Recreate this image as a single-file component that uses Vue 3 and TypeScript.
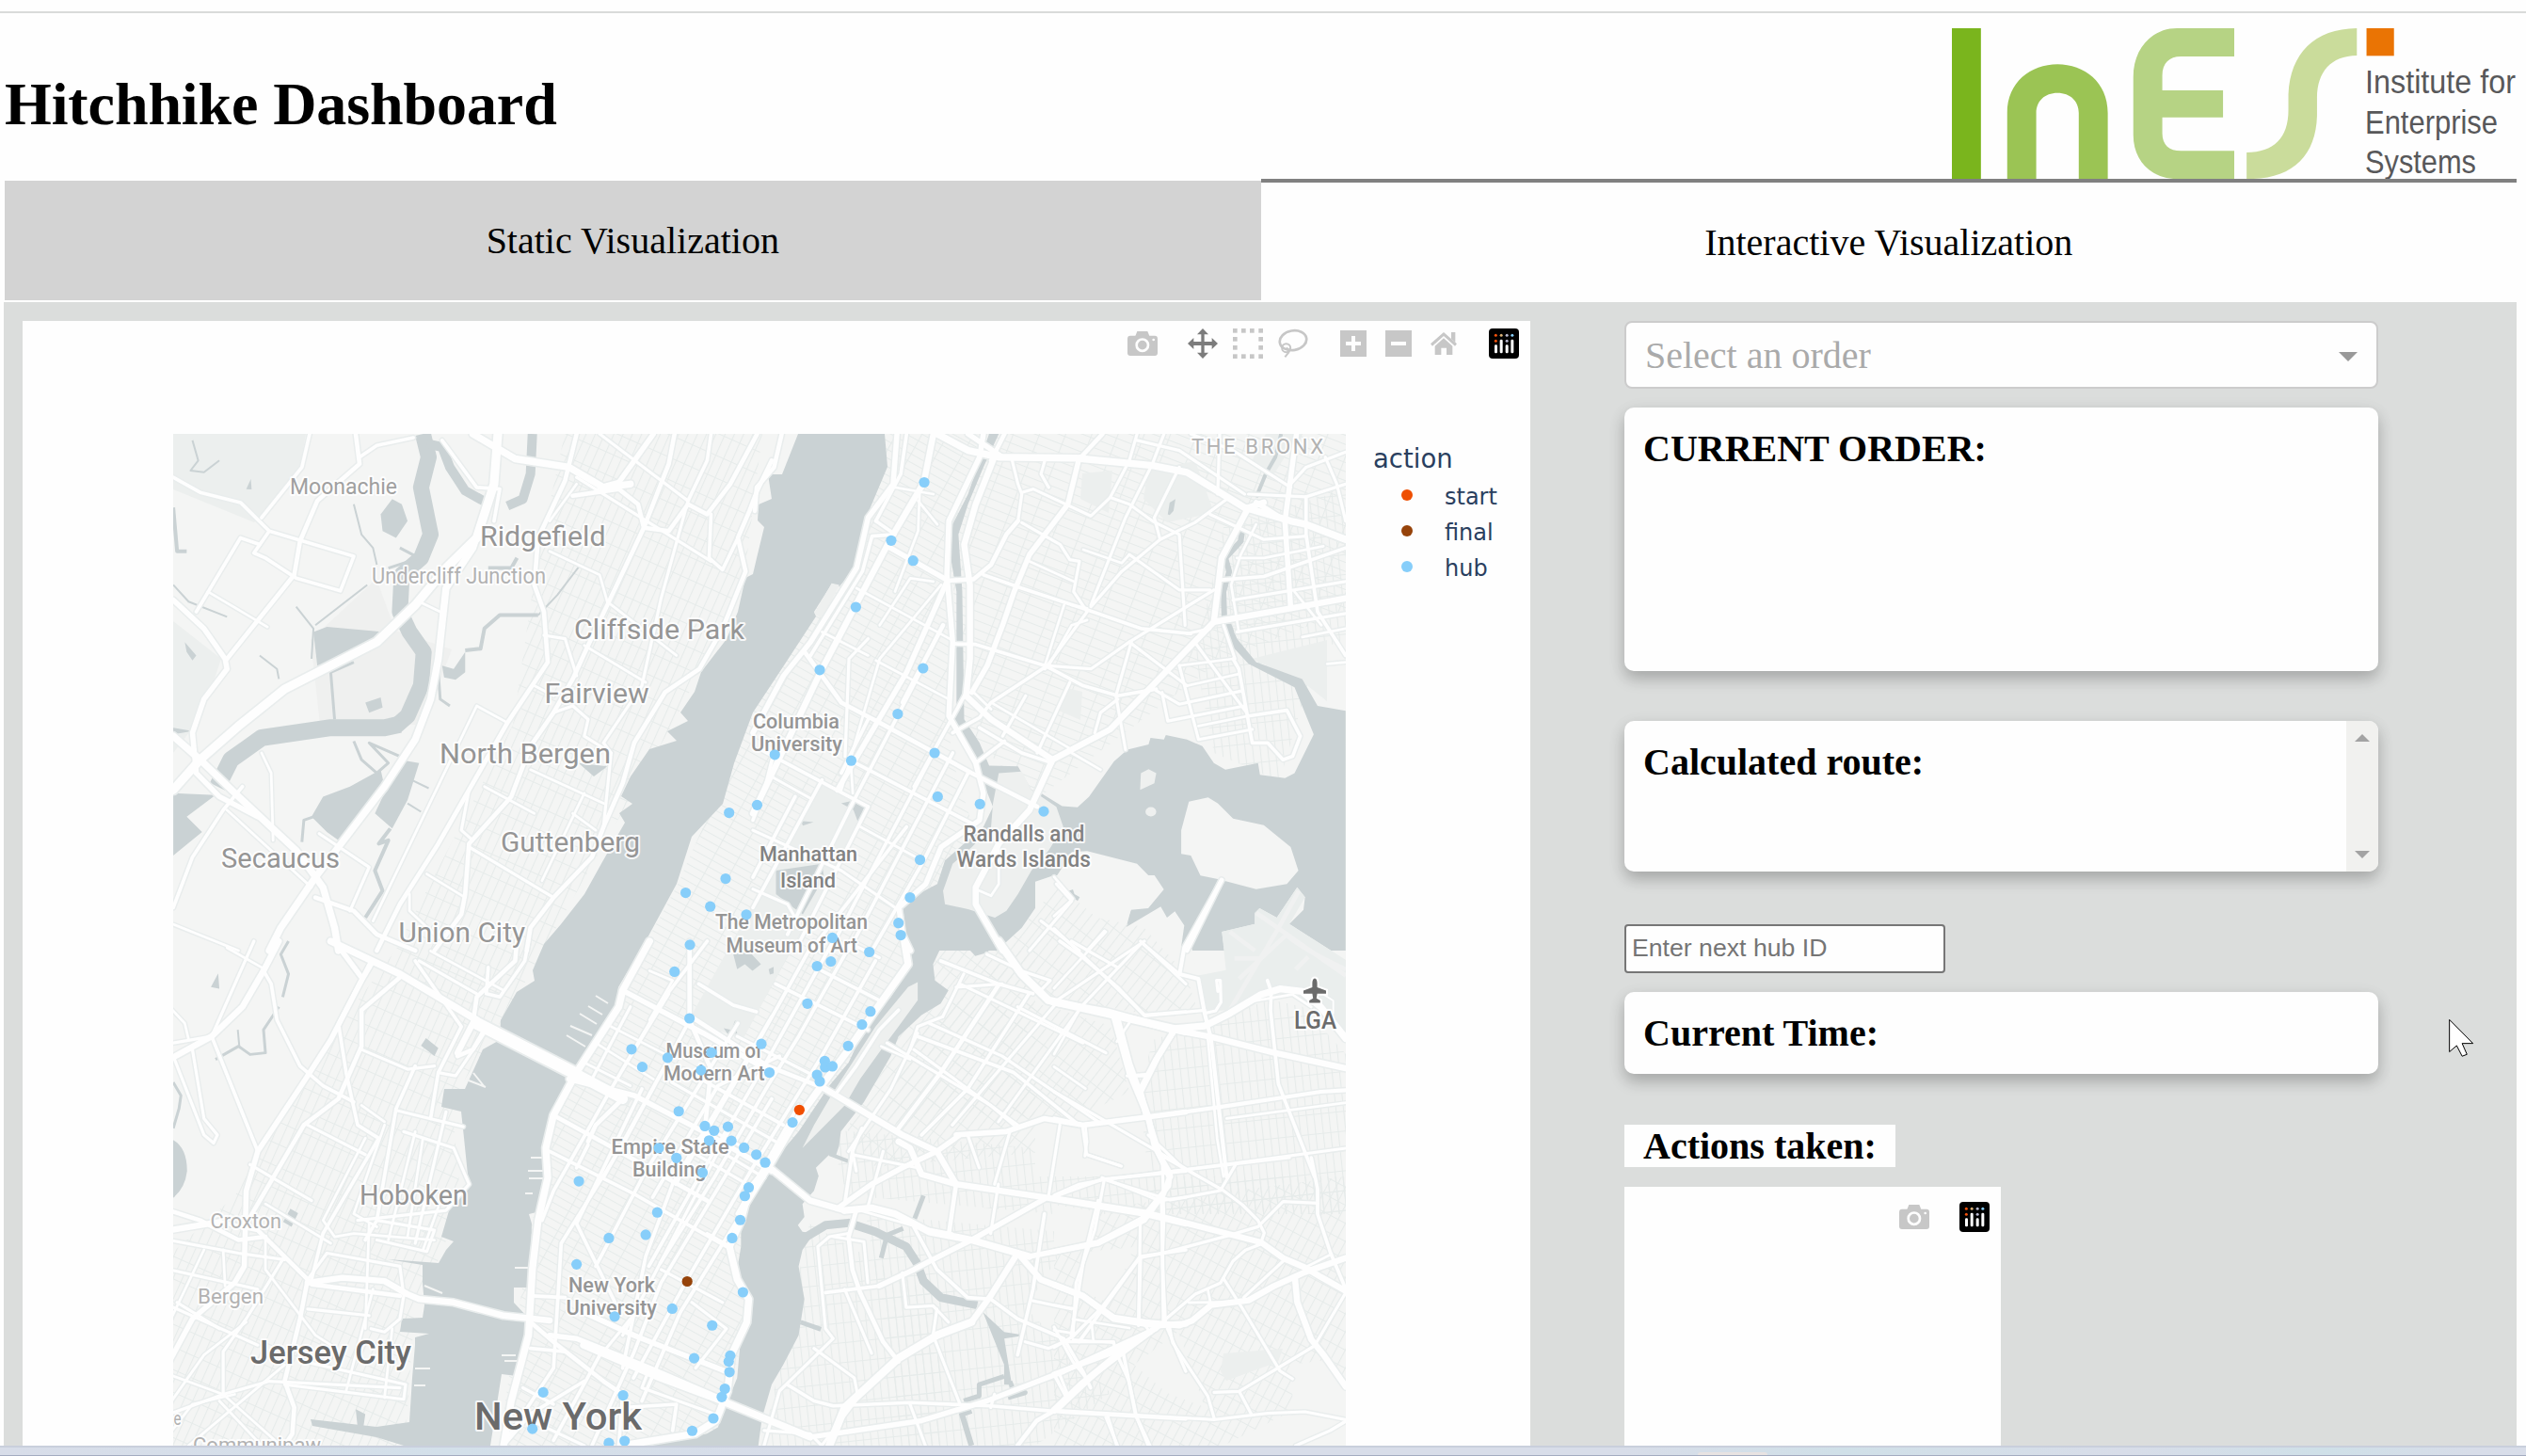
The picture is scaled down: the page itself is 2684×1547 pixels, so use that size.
<script setup lang="ts">
interface Sheet {
  x: number
  y: number
  sx: number
  sy: number
  // [stroke width, polyline points]
  roads: [number, string][]
  hubs: [number, number][]
}

interface Label {
  t: string
  x: number
  y: number
  w: number
  s: number
  c: string
  b?: number
}

// The map is stored as survey sheets, each one with its own origin and scale.
const A: Sheet = {
  x: 180, y: 450, sx: 2.45, sy: 2.8,
  roads: [
    [10, '855,31 845,180 800,340 720,430 640,540 540,650 300,790 180,900 80,1000 10,1090'],
    [8, '845,180 790,370 720,490 700,700 680,820 640,940 560,1080 450,1245 380,1350 290,1500 260,1568'],
    [8, '10,930 80,1000 180,1110 330,1270 400,1380 430,1500 440,1568'],
    [6, '10,525 90,610 145,700 150,730 90,820 60,920 70,1040 130,1110 230,1170'],
    [4, '10,160 80,205 185,235 260,320 480,395 445,498 330,460 250,400 220,385 260,320'],
    [4, '365,31 345,130 240,280'],
    [4, '235,360 185,340 70,560'],
    [3, '100,500 255,605'],
    [5, '485,31 495,120 385,230 340,350 325,450 150,700'],
    [4, '495,100 540,65 635,42'],
    [4, '710,50 800,190 860,195 845,290'],
    [8, '790,31 900,105 1040,130 1130,190 1200,180'],
    [6, '1260,31 1170,175 1120,190'],
    [5, '1050,215 1170,195 1220,240 1235,310 1300,320 1350,240 1400,270 1460,180 1530,31'],
    [5, '1568,110 1530,200 1510,260 1480,340 1500,440 1440,610 1380,730 1290,800 1210,950 1180,1070 1130,1200 1100,1290 1000,1410 940,1500 930,1568'],
    [4, '1410,270 1405,400 1440,435 1480,340'],
    [5, '1060,31 1030,170 960,340 950,480 975,560 985,710 880,890 800,1050 700,1250 600,1430 540,1568'],
    [5, '1315,31 1300,120 1235,310 1140,540 1090,660 1050,760 1000,860 940,960 890,1110 780,1250 770,1400 760,1460 690,1568'],
    [3.5, '1350,230 1280,520 1230,780 1130,950 1150,980 1130,1200'],
    [3.5, '1120,31 1350,230'], [3.5, '1060,160 1410,410'], [3, '1080,660 1240,770'],
    [3.5, '975,630 1030,640 1060,750'], [3.5, '1000,860 1050,840 1090,880 1080,930 1150,980'],
    [3, '990,380 1120,450 1140,530 1320,690'], [4, '1410,31 1400,110 1350,230'], [3, '990,290 1060,180'],
    [3, '530,1480 800,840 880,890'], [3.5, '780,1260 1000,1410'], [3, '670,1340 770,1410'],
    [3, '820,1080 950,1160'], [3, '940,1030 1130,1130'], [3, '1080,1100 970,1360'],
    [5, '380,1410 480,1450 540,1520 640,1568'],
    [3, '240,980 265,1040 270,1240'], [3, '150,1150 370,1380'], [3.5, '390,1220 520,1320 470,1450'],
    [4, '10,1440 60,1290 140,1150 190,1080'], [3, '10,1490 180,1568'], [3.5, '780,1090 760,1210 790,1240'],
    [3, '950,780 1000,810'], [3, '1050,1160 1110,1210'], [3, '650,530 705,560'], [3, '625,1400 625,1450 690,1520'],
  ],
  hubs: [[1457, 1158], [1448, 1354], [1344, 1396], [1408, 1437], [1502, 1461]],
}

const B: Sheet = {
  x: 800, y: 450, sx: 2.45, sy: 2.8,
  roads: [
    [5, '75,31 55,130 10,190 5,260'],
    [8, '480,31 560,80 640,100 840,103 1040,125 1130,145 1280,250 1400,290 1440,300 1543,345'],
    [6, '560,31 650,100'],
    [7, '1330,235 1290,250 1220,400 1200,590 1040,780 930,910 780,1000 720,1150 640,1250 580,1380 580,1430 650,1568'],
    [6, '1310,235 1380,285'],
    [7, '1200,590 1400,550 1543,520'],
    [6, '1415,31 1385,290 1400,550'],
    [6, '850,100 820,240 720,390 680,500 650,600 610,720 570,800'],
    [5, '910,31 850,105'],
    [7, '625,110 580,240 550,360 565,480 565,700 555,810 620,880 780,1000'],
    [5, '655,31 620,110'],
    [4, '590,905 700,980 780,1010'],
    [6, '600,31 590,100 510,290 505,450 520,650 510,870 580,1010 600,1100 590,1180 490,1260 450,1370 380,1440 390,1520 410,1568'],
    [5, '515,467 575,463 620,420 660,330 690,290'],
    [6, '350,365 505,465'], [6, '505,470 400,740 220,1090'],
    [6, '375,31 365,180 300,280 270,430 150,650 80,750 0,920'],
    [7, '470,31 445,175 360,340 180,730 0,1160'],
    [4, '400,31 385,150 320,290'], [4, '320,290 370,330 310,335 285,440 150,690'],
    [5, '135,680 230,830 330,890 570,1040 740,1140'],
    [4, '520,920 590,875 620,830 760,725'], [4, '580,1010 655,945'],
    [4, '520,655 580,657 760,720 860,780 950,810 1050,790'],
    [4, '600,450 700,490 860,550 1010,610 1140,625'],
    [3.5, '700,295 800,360 825,405 850,410 835,500 870,560 760,730'],
    [3, '830,540 870,550'],
    [3.5, '675,110 690,180 700,210 690,290'], [3.5, '760,110 750,150 770,190'],
    [3.5, '700,205 730,195 880,275 930,220 980,110 1000,31'], [3.5, '1070,31 1040,120 970,280 880,540'],
    [3.5, '930,220 980,240 1040,290 1110,330 1125,600'], [3.5, '1215,31 1210,210'],
    [3.5, '1240,220 1150,295 1060,345 960,440 880,545'], [3.5, '1110,130 1045,280 1060,345'],
    [3, '860,375 960,415 980,390'], [3.5, '980,390 1110,495 1190,495'],
    [3.5, '1000,50 1110,80 1280,210'], [3.5, '1190,270 1330,345 1440,335'],
    [3.5, '1140,31 1250,80 1400,190'], [3.5, '1290,210 1440,218 1543,180'], [3.5, '1490,100 1520,180 1543,290'],
    [3.5, '1400,180 1440,130 1543,85'], [4, '1440,218 1440,330 1470,560 1543,690'], [3, '1410,500 1480,600'],
    [3, '1260,400 1330,400 1485,365'], [3, '1310,300 1270,390 1245,480 1265,620'],
    [4, '1220,465 1330,455 1543,370'], [3.5, '1250,525 1543,470'], [3.5, '1260,620 1543,565'], [3, '1430,635 1543,610'],
    [3, '1495,715 1543,710'],
    [4, '1290,870 1390,853 1425,930 1405,990 1380,1000 1340,950 1300,950 1265,730 1250,700'],
    [3.5, '1150,650 1285,860'], [3.5, '1110,720 1160,940 1300,910'], [3, '1110,720 1250,700'],
    [3, '1130,780 1265,745'], [3.5, '1050,795 1110,835 1275,795'], [3.5, '1065,800 1080,885 1280,840'], [3, '1160,900 1290,870'],
    [3.5, '1225,600 1255,700'], [3.5, '760,720 880,730 980,650 1200,495'], [3.5, '1130,625 1190,610'],
    [3.5, '980,650 1130,780'], [3.5, '985,650 945,810 970,970'], [3.5, '950,820 905,860 890,920'],
    [3.5, '825,770 740,980'], [3.5, '710,810 650,930'], [3, '620,830 830,970'], [3, '830,980 905,1030'],
    [3, '720,410 835,470'], [3, '810,540 760,720'], [3, '870,585 830,600 770,720'],
    [3, '575,800 620,850'], [3, '640,1260 640,1370 620,1405 590,1390'],
    [5, '495,600 390,830'], [4, '420,1080 560,790'], [3, '490,480 330,700 230,1090'], [3, '470,470 410,460 330,600'],
    [4, '470,980 200,1568'], [4, '440,730 250,1150 90,1520'], [4, '300,880 230,1040'], [4, '520,980 410,1220 250,1568'],
    [4, '560,1040 440,1310 310,1568'], [4, '400,1200 150,1568'], [4, '300,1140 110,1568'],
    [4, '110,1110 0,1350'], [4, '180,1060 0,1440'], [4, '50,1000 30,1090 0,1180'], [3.5, '240,990 250,700 300,640'],
    [4, '20,970 300,1140'], [3.5, '0,1210 230,1330 370,1440'], [4, '250,1000 570,1190'], [3, '270,490 520,645'],
    [3, '320,705 510,820'], [3, '180,620 300,690'], [3, '40,1045 150,1115'], [3, '280,1200 440,1300'],
    [3, '255,1010 260,1100'], [3, '370,190 470,210'], [3, '430,230 480,300'], [3, '435,180 430,320 370,500'],
    [3.5, '0,1385 90,1430 110,1470'],
    [5, '1220,1358 1130,1568'], [3.5, '790,1370 830,1420 720,1568'], [3.5, '750,1480 850,1568'], [3.5, '915,1510 870,1568'],
  ],
  hubs: [
    [446, 175], [360, 348], [417, 408], [268, 546], [174, 733], [443, 728], [377, 864], [473, 980], [57, 985],
    [256, 1003], [481, 1110], [591, 1132], [757, 1154], [11, 1135], [435, 1298], [409, 1410], [379, 1486],
    [385, 1522], [207, 1530],
  ],
}

const C: Sheet = {
  x: 180, y: 1000, sx: 2.45, sy: 2.866,
  roads: [
    [7, '285,0 245,90 190,200 110,290 0,360'], [4, '245,90 265,130 280,240 340,380 400,440 480,490'],
    [4, '110,290 230,640'], [3, '0,200 40,250 50,300'], [3.5, '10,310 110,290'],
    [3.5, '10,350 90,590 115,615 125,590 90,540 60,330'], [3.5, '220,0 110,290'], [3, '150,20 240,80'],
    [6, '530,60 500,120 420,300 360,410 230,640 200,760 195,990 170,1040 60,1150 0,1280'],
    [6, '430,0 500,110'],
    [8, '420,0 600,100 800,240'], [14, '800,250 1060,405'], [12, '1060,405 1180,480'],
    [4, '520,70 440,250 460,400 490,560 545,600 400,890 370,1030'],
    [5, '905,0 900,60 800,170 790,250'], [5, '600,110 500,210 500,320 440,480 350,560 200,860'],
    [4, '640,60 730,210 760,260 700,400 680,540'], [4, '830,80 825,160 860,170 925,60 935,0'],
    [7, '790,250 750,340'], [5, '820,270 790,330 750,350'], [4, '640,380 590,510 540,850 510,910'],
    [3.5, '700,400 745,410 820,280'], [3.5, '720,520 640,920'], [3.5, '590,515 765,565'], [3.5, '500,330 620,390 690,380'],
    [3.5, '610,580 740,630 780,740 720,820 490,850'], [3, '660,600 620,900'], [3, '640,580 570,910'],
    [3, '700,810 660,940'], [3, '500,500 560,550'], [3.5, '360,560 510,650'], [3.5, '210,680 370,790'], [3, '250,800 420,920'],
    [3, '560,560 480,830 540,870'], [3, '510,600 400,850 430,900 480,890 690,910'],
    [3.5, '650,60 800,160'], [3, '680,30 870,150'],
    [7, '0,880 130,855'], [5, '130,855 230,880 360,1030 340,1150 300,1340 325,1420 320,1500 300,1536'],
    [5, '0,820 80,850 180,910 250,900'],
    [7, '360,1040 450,1025 560,1035 620,1075 650,1090 740,1100 870,1140 990,1155'], [5, '370,1045 600,1080'],
    [3.5, '0,1000 230,1060'], [3.5, '0,910 180,950 300,970'], [3.5, '540,910 670,945 690,880 540,850'],
    [3.5, '360,1120 520,1140'], [3.5, '360,1030 410,950 600,990 610,1080 600,1150 560,1190 525,1180'],
    [3, '520,860 510,1180'], [3.5, '300,1350 610,1395 615,1350 350,1280'], [3.5, '0,1440 140,1380 260,1340 600,1360'],
    [3, '0,1320 140,1380 290,1536'], [3, '200,1160 90,1260 0,1410'], [3.5, '140,1380 140,1250 200,1150 300,960'],
    [3.5, '0,1110 230,1230'], [3, '530,1060 460,1370'], [3, '580,1180 560,1390'], [3, '50,1536 300,1290'],
    [3, '140,940 145,1050'], [3, '250,910 250,1000 380,1200 420,1230'], [3, '90,940 0,1160'], [3.5, '20,1100 130,1180'],
    [3, '130,1400 240,1536'], [3, '0,1500 60,1410 170,1380'],
    [8, '1250,0 1180,150 1170,200 1060,400 1000,530 980,630 985,720 960,850 945,1000 935,1200 890,1400 870,1536'],
    [6, '1180,150 1390,280 1568,400'], [6, '1040,420 1210,470 1390,580 1568,700'],
    [5, '1000,530 1140,620 1400,790'], [4, '990,640 1210,770 1450,930'],
    [5, '1354,0 1354,240 1410,390 1395,560'], [4, '1090,620 1060,690'],
    [4, '1400,0 1290,170 1140,470 1000,760 970,850'], [4, '1480,250 1240,700 1110,990'],
    [4, '1568,230 1310,740 1240,960 1180,1300'], [4, '1568,480 1280,1040 1210,1250 1100,1536'],
    [4, '1568,680 1330,1130 1230,1400'], [4, '1350,250 1180,620 1020,920 1000,1300 870,1530'],
    [4, '1290,380 1130,720'], [4, '1230,450 1060,860 1160,1100'], [3.5, '1460,570 1180,1200'],
    [5, '1180,480 1110,560 1090,610'], [3.5, '1200,200 1100,420'], [3.5, '1300,160 1180,390'],
    [5, '940,1160 1010,1230 1130,1340 1180,1380'], [4, '940,1240 1030,1250'], [4, '945,1080 1030,1085'],
    [6, '990,1200 1060,1210 1250,1300 1450,1400'], [5, '1080,1130 1250,1220 1450,1310'],
    [4, '1130,1240 1000,1520'], [4, '1180,1380 1170,1536'], [4, '1180,1420 1320,1410 1310,1490'],
    [4, '870,1536 940,1440 1080,1340'], [3.5, '1400,890 1460,930'], [3.5, '1280,1000 1440,1100'], [3.5, '1360,1100 1450,1180 1370,1300'],
    [3.5, '1200,1150 1130,1250'], [3.5, '920,1360 1000,1410'], [3.5, '900,1450 960,1470 1080,1536'], [3.5, '1250,1300 1230,1360 1420,1440'],
    [3, '1250,240 1310,120 1250,90'], [3, '1150,260 1300,350'], [3, '1110,310 1260,420'], [3, '1080,370 1200,440'],
  ],
  hubs: [[1066, 731], [1060, 984], [973, 1374], [945, 1485]],
}

const D: Sheet = {
  x: 620, y: 1000, sx: 2.45, sy: 2.866,
  roads: [
    [8, '835,0 845,70 760,210 690,330 620,440 540,570 480,690 430,760 410,850 380,930 400,1030 430,1090 425,1160 385,1260 375,1370 345,1460 290,1500 100,1536'],
    [7, '615,440 830,590 920,640 970,740'], [7, '480,685 590,790 680,820'],
    [8, '680,820 750,812 810,830 900,885 1010,910 1160,960'], [6, '1160,960 1340,920 1460,850 1510,770 1525,720 1500,650 1470,540'],
    [6, '0,1130 130,1200 370,1310'],
    [8, '0,1230 200,1330 360,1400 590,1510'], [6, '590,1510 650,1500 880,1460 1050,1400 1250,1310 1490,1180'],
    [9, '640,1536 680,1420 820,1270 920,1200 1010,1160'], [7, '1010,1160 1060,1080 1130,950'],
    [7, '1130,950 1190,1030 1300,1080 1380,1150 1490,1170 1568,1165'],
    [9, '1080,0 1140,100 1210,180 1380,225 1568,275'],
    [6, '970,590 1100,580 1200,540 1300,560 1470,535 1568,520'], [6, '660,815 750,740 830,690 920,640 980,590'],
    [7, '820,610 850,630 880,710 970,740 1200,780 1460,830 1568,860'],
    [5, '710,820 690,900 700,1000 720,1070 780,1220 820,1280'], [6, '1200,785 1010,910 900,975 860,1000 770,1050'],
    [4, '770,1050 630,1070'], [4, '1220,780 1350,725 1568,700'],
    [5, '1080,135 930,400 820,570'], [4, '1160,160 1000,450 880,590'], [4, '930,60 1080,130 1170,160'],
    [4, '870,290 1120,400 1290,560'], [3.5, '860,330 1130,560'], [3.5, '900,250 1090,350 1340,550'], [3.5, '980,130 1300,310'],
    [3.5, '1130,200 1360,340'], [3.5, '1050,40 1140,90 1215,120 1190,150'], [3.5, '1460,0 1220,190'], [3.5, '1390,80 1270,0'],
    [4, '1240,0 1300,50 1390,140 1460,225 1568,215'], [3.5, '1450,0 1568,130'], [3.5, '1290,210 1080,550'],
    [3.5, '1230,190 960,560'], [3.5, '790,310 1060,500 1120,560'], [3.5, '870,280 800,450 690,640'],
    [3.5, '935,230 870,260 850,330'], [3.5, '990,100 935,230'], [3.5, '970,140 1090,130'],
    [6, '1380,230 1420,400 1470,540'], [6, '1540,270 1490,360 1450,450'], [3.5, '1415,410 1470,405'],
    [4, '1568,940 1450,960 1290,1220'], [4, '1505,780 1510,1170'], [4, '1450,960 1445,1170'], [4, '1340,790 1300,980 1270,1200'],
    [4, '1200,830 1170,1060 1130,1260'], [5, '970,740 950,900'], [3.5, '1080,740 1060,890'], [3.5, '1240,560 1210,780'],
    [3.5, '1110,580 1070,740'], [3.5, '1000,590 1030,690'], [4, '860,870 920,1000 1000,1085 1060,1090 1130,1150 1250,1210 1300,1310 1320,1360'],
    [4, '725,570 700,640 680,800'], [3.5, '700,650 870,690'], [3.5, '780,640 740,810'], [3.5, '700,640 710,700'],
    [3.5, '690,890 640,900 610,930 630,1180 650,1210 510,1370 470,1536'], [3.5, '650,900 730,915 740,1040'], [3.5, '680,1060 750,1255'],
    [3.5, '600,1240 705,1330 715,1390 620,1536'], [4, '530,1350 600,1400 650,1415 850,1405 1060,1415 1260,1435 1568,1455'],
    [3.5, '850,1410 890,1536'], [3.5, '920,1120 910,1200 980,1410'], [5, '1130,1536 1180,1460 1240,1420 1340,1310 1490,1180'],
    [3.5, '1390,1260 1420,1340 1440,1450 1470,1536'], [3.5, '1360,1450 1390,1536'], [3.5, '830,1010 840,1115 910,1110 950,1160'],
    [3.5, '470,1490 590,1500 620,1536'], [3.5, '1300,570 1310,650 1400,685'], [3.5, '1350,720 1500,790 1568,780'],
    [3.5, '1470,590 1568,700'], [3.5, '1170,1095 1270,1120'], [3.5, '1150,1220 1210,1240 1250,1220 1380,1220 1385,1250'], [3.5, '1520,1180 1568,1310'],
    [3.5, '1060,1420 1070,1380'], [3.5, '1240,1320 1260,1380'], [3, '720,820 870,870 960,890'],
    [4, '700,0 560,290 480,440 340,720 200,980'], [4, '650,0 470,380 300,720 170,990'], [4, '600,0 410,400 240,740'],
    [4, '760,60 620,350 440,690 270,1030 130,1330'], [4, '560,500 400,830'], [4, '510,350 350,440 180,780'],
    [5, '280,230 480,380 610,440'], [4, '500,130 740,270'], [4, '620,90 770,180'], [4, '300,130 390,195 450,215'],
    [4, '260,390 520,560'], [3.5, '400,290 600,410'], [3.5, '700,10 770,50'], [3.5, '230,430 500,610'],
    [4, '820,210 770,270 710,380 660,460'], [3, '775,320 850,360'],
    [3.5, '300,600 470,720'], [3.5, '280,640 440,750'], [3.5, '340,580 420,630'],
  ],
  hubs: [
    [277, 11], [237, 93], [276, 235], [125, 329], [219, 355], [153, 383], [333, 339], [306, 393], [463, 313], [484, 400],
    [644, 62], [608, 76], [744, 33], [583, 190], [747, 214], [725, 254], [689, 319], [628, 365], [629, 384], [648, 381],
    [608, 407], [615, 427], [544, 552], [248, 518], [316, 563], [340, 577], [376, 565], [327, 607], [385, 608], [196, 630],
    [242, 660], [418, 629], [450, 650], [473, 674], [310, 705], [430, 750], [420, 776], [408, 849], [387, 904], [192, 826],
    [162, 894], [66, 904], [415, 1069], [231, 1119], [81, 1143], [335, 1170], [288, 1270], [382, 1262], [378, 1280],
    [380, 1312], [368, 1363], [360, 1388], [338, 1453], [283, 1491], [103, 1383], [66, 1528], [107, 1522],
  ],
}

const E: Sheet = {
  x: 1120, y: 930, sx: 3, sy: 3,
  roads: [
    [4.5, '535,15 415,230 400,315 460,330 480,440 500,520 525,740 550,960'],
    [8, '0,405 170,435 370,490 480,480 560,440 660,380 720,362 790,370 850,420 930,520'],
    [7, '370,490 500,515 700,565 930,615'], [7, '200,450 240,600 300,770 320,860 370,960'],
    [7, '385,490 330,580 275,690 295,770'], [4.5, '0,775 90,795 300,770 520,740 850,690 930,685'],
    [3, '550,775 930,725'], [4, '680,335 692,370 690,430 715,665 830,960'], [3.5, '0,170 170,330 290,448 480,430'],
    [3, '0,360 165,180'], [3.5, '95,410 280,215 400,315'], [3, '0,610 100,680'], [3.5, '0,690 140,770 330,880 460,960'],
    [3, '0,570 80,430'], [3.5, '480,440 515,432 532,405 530,335 518,335 522,370'], [3, '490,520 520,840 540,960'],
    [3, '100,800 105,850 98,895'], [3, '100,888 210,925'], [3.5, '330,950 560,920 930,870'], [3, '640,400 760,380 820,420'],
    [3, '200,530 240,470'], [3, '0,5 60,75 0,130'], [3, '250,640 300,640'], [2, '860,380 890,400 890,440'],
  ],
  hubs: [],
}

const F: Sheet = {
  x: 1120, y: 1230, sx: 3, sy: 3,
  roads: [
    [7, '0,130 290,175 660,270 730,320 800,350 850,380 930,425'], [6, '0,300 140,270 280,195 365,90 370,50 340,0'],
    [3.5, '0,120 80,85 160,70 360,45 750,0'], [7, '0,405 90,440 190,510 290,525 400,535 440,520 500,470 620,455 700,410 800,365 930,320'],
    [3.5, '160,70 130,230 70,400 60,570'], [3.5, '160,70 370,135 530,105 580,20'], [3.5, '345,0 350,200 345,330 355,520'],
    [3.5, '275,195 270,510'], [3.5, '355,0 540,105 600,150 650,200 670,240 660,270'],
    [3.5, '0,605 60,570 150,480 270,320 345,305 550,250 650,220 730,140 840,145'],
    [4, '820,0 840,100 840,180 880,300 930,420'], [7, '768,385 775,460 820,580 860,630 930,730'],
    [3.5, '350,520 450,435 530,400 570,330 610,295 660,275'], [3, '430,462 600,460'], [3.5, '540,385 600,480 720,680 760,705'],
    [3.5, '510,748 590,745 830,600 930,430'], [3.5, '605,445 730,330'], [3.5, '368,540 378,590 490,760 510,830'],
    [6, '0,690 190,620 330,540'], [8, '0,805 90,720 200,630 240,600'], [3.5, '0,805 510,835 680,815 800,810 930,835'],
    [4, '220,620 260,820 305,918'], [3.5, '170,820 200,918'], [3.5, '590,745 630,820'], [3.5, '770,918 880,870 930,840'],
    [3, '60,515 240,543'], [3, '0,470 60,480'], [3, '0,550 60,560 70,560'], [3.5, '0,540 60,650 100,700'], [3, '60,580 190,590 205,640 230,690'],
    [3, '120,530 125,580'], [3, '490,420 500,470'], [3, '800,350 880,310'], [4, '5,700 40,765'], [3, '285,530 310,560'],
  ],
  hubs: [],
}

const sheets: Sheet[] = [A, B, C, D, E, F]
const tf = (s: Sheet): string => `translate(${s.x} ${s.y}) scale(${1 / s.sx} ${1 / s.sy})`
const hubs = sheets.flatMap((s) => s.hubs.map(([x, y]) => ({ x: s.x + x / s.sx, y: s.y + y / s.sy })))

const mid = '#959595'
const light = '#b2b2b2'
const dark = '#6b6b6b'
const labels: Label[] = [
  { t: 'Moonachie', x: 309, y: 524.6, w: 114, s: 24, c: '#a0a0a0' },
  { t: 'Ridgefield', x: 511, y: 580, w: 133.5, s: 30, c: mid },
  { t: 'Undercliff Junction', x: 396, y: 620, w: 185, s: 23, c: light },
  { t: 'Cliffside Park', x: 611, y: 678.6, w: 181, s: 30, c: mid },
  { t: 'Fairview', x: 579.6, y: 747, w: 111, s: 30, c: mid },
  { t: 'North Bergen', x: 468, y: 811, w: 182, s: 30, c: mid },
  { t: 'Guttenberg', x: 533, y: 905, w: 148, s: 30, c: mid },
  { t: 'Secaucus', x: 236, y: 922, w: 126, s: 30, c: mid },
  { t: 'Union City', x: 424.5, y: 1001, w: 134.5, s: 30, c: mid },
  { t: 'THE BRONX', x: 1267, y: 482, w: 140, s: 22, c: light },
  { t: 'Columbia', x: 801, y: 773.6, w: 92, s: 22, c: mid, b: 1 },
  { t: 'University', x: 799, y: 798, w: 97, s: 22, c: mid, b: 1 },
  { t: 'Manhattan', x: 808, y: 915, w: 104, s: 22, c: '#828282', b: 1 },
  { t: 'Island', x: 830, y: 943, w: 59, s: 22, c: '#828282', b: 1 },
  { t: 'Randalls and', x: 1024.5, y: 894, w: 129, s: 23, c: '#828282', b: 1 },
  { t: 'Wards Islands', x: 1017.5, y: 921.4, w: 142.5, s: 23, c: '#828282', b: 1 },
  { t: 'The Metropolitan', x: 761, y: 987, w: 162, s: 21.5, c: mid, b: 1 },
  { t: 'Museum of Art', x: 772.6, y: 1011.5, w: 139.4, s: 21.5, c: mid, b: 1 },
  { t: 'Museum of', x: 708.6, y: 1123.5, w: 102.4, s: 21.5, c: mid, b: 1 },
  { t: 'Modern Art', x: 706, y: 1148, w: 107.5, s: 21.5, c: mid, b: 1 },
  { t: 'Empire State', x: 650.6, y: 1225.8, w: 125, s: 21.5, c: mid, b: 1 },
  { t: 'Building', x: 673, y: 1249.8, w: 78.4, s: 21.5, c: mid, b: 1 },
  { t: 'New York', x: 605, y: 1373, w: 92, s: 21.5, c: mid, b: 1 },
  { t: 'University', x: 602.5, y: 1396.7, w: 96.5, s: 21.5, c: mid, b: 1 },
  { t: 'Hoboken', x: 383, y: 1280, w: 115, s: 30, c: mid },
  { t: 'Croxton', x: 224.5, y: 1304.6, w: 75.5, s: 22.5, c: light },
  { t: 'Bergen', x: 211, y: 1385, w: 70, s: 22.5, c: light },
  { t: 'e', x: 185.5, y: 1513.6, w: 8, s: 20, c: light },
  { t: 'Communipaw', x: 206, y: 1542.5, w: 136, s: 22.5, c: light },
  { t: 'Jersey City', x: 267, y: 1448.7, w: 171, s: 35, c: dark, b: 1 },
  { t: 'New York', x: 505, y: 1519, w: 178, s: 41, c: dark, b: 1 },
  { t: 'LGA', x: 1376, y: 1092.5, w: 45, s: 25, c: dark, b: 1 },
]

const legend = [
  { name: 'start', color: '#ee4f02' },
  { name: 'final', color: '#96430a' },
  { name: 'hub', color: '#87cefa' },
]

const selectSquares = [0, 27, 54, 82].flatMap((x) =>
  [0, 27, 54, 82].filter((y) => x % 82 === 0 || y % 82 === 0).map((y) => ({ x, y })),
)
</script>

<template>
  <div class="page">
    <div class="chrome"></div>
    <header class="header">
      <h1>Hitchhike Dashboard</h1>
      <svg class="logo" viewBox="83 90 1460 480" preserveAspectRatio="none">
        <rect x="83" y="90" width="75" height="480" fill="#7ab51d" />
        <path fill="#9bc454" d="M226 570V360C226 262 287 205 356 205S486 262 486 360V570H411V360C411 322 389 296 356 296S301 322 301 360V570Z" />
        <path fill="#b6d384" d="M813 90H665C600 90 552 155 552 245V430C552 515 600 570 665 570H813V481H675C645 481 627 462 627 425V374H784V288H627V240C627 202 645 180 675 180H813Z" />
        <path fill="#cadc9b" d="M1130 90C1020 92 958 170 953 300V350C953 440 915 485 845 486V570C960 574 1024 500 1027 370V310C1028 230 1062 178 1130 177Z" />
        <rect x="1155" y="90" width="71" height="88" fill="#ea7404" />
      </svg>
      <svg class="logo-text" width="170" height="120" viewBox="2510 70 170 120">
        <g font-family="'Liberation Sans', Arial, sans-serif" font-size="34.5" fill="#58585a">
          <text x="2513" y="99" textLength="160" lengthAdjust="spacingAndGlyphs">Institute for</text>
          <text x="2513" y="142" textLength="141" lengthAdjust="spacingAndGlyphs">Enterprise</text>
          <text x="2513" y="184.300" textLength="118" lengthAdjust="spacingAndGlyphs">Systems</text>
        </g>
      </svg>
    </header>

    <nav class="tabs">
      <div class="tab">Static Visualization</div>
      <div class="tab selected">Interactive Visualization</div>
    </nav>

    <main class="panel">
      <section class="graph">
        <div class="modebar">
          <div class="group">
            <svg class="ic" viewBox="0 0 96 96"><path d="M25 24L31 9H64L70 24Z" /><rect y="23" width="96" height="64" rx="9" /><circle cx="47.500" cy="53" r="18.500" fill="#c7c7c7" stroke="#fefefe" stroke-width="8" /><circle cx="83" cy="36" r="4" fill="#fefefe" /></svg>
          </div>
          <div class="group">
            <svg class="ic active" viewBox="0 0 96 96"><path d="M48 0L66 19H53V42H77V30L96 48L77 66V54H53V77H66L48 96L30 77H43V54H19V66L0 48L19 30V42H43V19H30Z" /></svg>
            <svg class="ic" viewBox="0 0 96 96"><rect v-for="(q, i) in selectSquares" :key="i" :x="q.x" :y="q.y" width="14" height="14" /></svg>
            <svg class="ic" viewBox="0 0 96 96"><g fill="none" stroke="#c7c7c7"><ellipse cx="48" cy="38" rx="43" ry="31" stroke-width="8" transform="rotate(-10 48 38)" /><circle cx="26" cy="62" r="13.500" stroke-width="6" /><path d="M26 62Q40 68 34 76L22 91" stroke-width="6" /></g></svg>
          </div>
          <div class="group">
            <svg class="ic" viewBox="0 0 96 96"><rect x="6" y="6" width="84" height="84" /><path d="M42 24H54V42H72V54H54V72H42V54H24V42H42Z" fill="#fefefe" /></svg>
            <svg class="ic" viewBox="0 0 96 96"><rect x="6" y="6" width="84" height="84" /><rect x="24" y="42" width="48" height="12" fill="#fefefe" /></svg>
            <svg class="ic" viewBox="0 0 96 96"><path d="M6 49L48 12L90 49L84 56L48 24L12 56Z" /><path d="M72 12H85V44L72 33Z" /><path d="M20 56L48 31L76 56V84H57V62H40V84H20Z" /></svg>
          </div>
          <div class="group">
            <svg class="ic" viewBox="0 0 96 96"><rect width="96" height="96" rx="12" fill="#000" /><g fill="#fff"><rect x="18" y="52" width="9" height="27" rx="4" /><rect x="35" y="35" width="9" height="44" rx="4" /><rect x="53" y="52" width="9" height="27" rx="4" /><rect x="70" y="35" width="9" height="44" rx="4" /></g><g fill="#f4510b"><circle cx="22" cy="22" r="4.500" /><circle cx="22" cy="39.500" r="4.500" /></g><circle cx="39.500" cy="22" r="4.500" fill="#d8b078" /><circle cx="57.500" cy="22" r="4.500" fill="#b9b9d0" /><circle cx="57.500" cy="39.500" r="4.500" fill="#b9b9d0" /><circle cx="74.500" cy="22" r="4.500" fill="#87cefa" /></svg>
          </div>
        </div>

        <div class="plot">
          <svg class="map" width="1246" height="1075" viewBox="184 461 1246 1075">
            <defs>
              <pattern id="g1" width="24" height="8" patternUnits="userSpaceOnUse" patternTransform="rotate(29)"><path d="M0 0H24M0 0V8" class="st" /></pattern>
              <pattern id="g2" width="9" height="22" patternUnits="userSpaceOnUse" patternTransform="rotate(24)"><path d="M0 0H9M0 0V22" class="st" /></pattern>
              <pattern id="g3" width="26" height="9" patternUnits="userSpaceOnUse" patternTransform="rotate(21)"><path d="M0 0H26M0 0V9" class="st" /></pattern>
              <pattern id="g4" width="9" height="24" patternUnits="userSpaceOnUse" patternTransform="rotate(38)"><path d="M0 0H9M0 0V24" class="st" /></pattern>
              <pattern id="g5" width="8" height="21" patternUnits="userSpaceOnUse" patternTransform="rotate(-6)"><path d="M0 0H8M0 0V21" class="st" /></pattern>
              <pattern id="g6" width="9" height="17" patternUnits="userSpaceOnUse" patternTransform="rotate(28)"><path d="M0 0H9M0 0V17" class="st" /></pattern>
            </defs>
            <rect x="184" y="461" width="1246" height="1075" fill="#f4f5f4" />

            <!-- open ground -->
            <g fill="#ecefee">
              <path d="M184 461H325L318 500L290 540L270 555L184 520Z" />
              <path d="M184 660L235 700L215 760L184 800Z" />
              <path d="M330 680L400 615L420 670L480 690L450 770L340 770Z" fill="#eff0ef" />
            </g>
            <!-- side streets -->
            <polygon fill="url(#g1)" points="930,461 1050,461 1012,560 1010,800 1040,900 960,1000 965,1030 800,1290 795,1400 760,1536 530,1536 565,1300 600,1150 660,1050 720,940 800,757" />
            <polygon fill="url(#g2)" points="600,461 810,461 790,620 720,760 640,900 560,1040 480,1170 490,1280 440,1400 430,1536 184,1536 184,1330 250,1270 330,1130 420,1010 545,770 570,600" />
            <polygon fill="url(#g3)" points="1050,461 1430,461 1430,650 1300,700 1180,790 1100,850 1020,770 1010,560" />
            <polygon fill="url(#g5)" points="1300,560 1430,520 1430,680 1400,690 1360,830 1290,800 1270,700" />
            <polygon fill="url(#g4)" points="1120,935 1270,1030 1280,1080 1180,1090 1150,1220 930,1240 900,1200 960,1080 1000,1010" />
            <polygon fill="url(#g5)" points="1180,1095 1430,1070 1430,1290 1120,1290 900,1270 880,1200 1100,1220" />
            <polygon fill="url(#g5)" points="860,1300 1000,1380 1000,1536 810,1536" />
            <polygon fill="url(#g6)" points="1120,1290 1430,1250 1430,1470 1300,1536 1120,1536" />
            <polygon fill="url(#g5)" points="920,1290 1140,1310 1090,1390 1180,1480 1100,1536 960,1536" />

            <!-- parks and large blocks -->
            <g fill="#ecefee">
              <path d="M873 829L922 857L789 1105L733 1082Z" />
              <path d="M1220 500L1270 490L1290 545L1240 555L1215 530Z" />
              <path d="M1345 461H1380L1350 510L1330 490Z" />
              <path d="M1300 1438L1363 1433L1358 1447L1303 1467L1297 1457Z" />
              <path d="M1150 503L1182 500L1178 545L1148 530Z" />
              <path d="M1130 730L1150 735L1148 765L1125 755Z" />
              <path d="M1330 700L1410 680V745L1385 725Z" />
            </g>
            <g fill="#f4f5f4">
              <path d="M1120 1280L1163 1287L1154 1320L1120 1328Z" />
              <path d="M1155 1330L1205 1325L1180 1385L1145 1370Z" />
              <path d="M1252 1415L1280 1495L1240 1480L1205 1450Z" />
              <path d="M1370 1450L1410 1445L1430 1480V1500L1375 1498Z" />
              <path d="M1197 1090L1240 1098L1212 1145Z" />
            </g>

            <!-- Hudson -->
            <polygon class="water" points="848,461 831,504 816,504 820,530 806,536 805,553 812,560 804,593 800,610 792,614 784,650 772,679 745,714 738,735 723,757 731,766 709,777 719,787 690,796 670,825 660,846 672,854 658,864 664,874 641,914 621,950 596,982 578,1003 566,1031 568,1042 549,1054 532,1084 531,1105 513,1115 494,1157 472,1157 469,1176 490,1181 493,1209 498,1258 478,1283 469,1314 482,1319 474,1328 466,1342 412,1338 449,1344 449,1363 451,1387 449,1400 427,1401 425,1415 456,1417 441,1421 441,1429 438,1464 435,1511 400,1516 330,1508 332,1515 400,1527 429,1536 521,1536 533,1460 549,1462 562,1401 546,1384 546,1368 564,1368 564,1335 565,1300 562,1290 570,1288 582,1227 578,1216 584,1185 600,1153 613,1136 635,1112 655,1066 657,1049 686,1000 719,939 735,889 768,854 780,811 800,757 833,707 867,655 865,650 884,620 892,623 912,600 922,546 943,496 940,461" />
            <g stroke="#f4f5f4" stroke-width="2">
              <path d="M629 1100L606 1090M634 1088L616 1077M640 1078L625 1069M646 1066L633 1058M622 1112L602 1100M582 1230H564M582 1244H561M580 1252H562M566 1268H558M563 1347H547M503 1140L515 1155M498 1148L516 1155M441 1454H457M440 1472H452M548 1440H533M550 1446H536M451 1366L470 1374" />
            </g>

            <!-- Harlem River, East River and the bays -->
            <g :transform="tf(B)">
              <polygon class="water" points="615,31 590,110 560,210 520,300 515,400 530,500 530,860 515,900 580,1000 600,1070 625,1140 600,1200 560,1240 500,1300 480,1370 430,1400 390,1440 405,1568 1543,1568 1543,855 1470,840 1430,760 1310,710 1260,640 1245,595 1228,595 1238,650 1290,715 1410,785 1460,925 1410,1040 1385,1055 1320,1045 1315,1010 1230,1030 1200,1010 1170,960 1130,940 1075,927 1070,940 1035,935 1030,955 975,970 940,1005 875,1110 845,1142 805,1138 750,1100 725,1090 690,1020 615,1018 590,950 550,880 545,500 535,330 560,240 600,130 640,31" />
              <polyline class="creek" stroke-width="6" points="1228,600 1225,500 1240,440 1230,400 1270,350 1275,310" />
              <polyline class="creek" stroke-width="4" points="1310,220 1335,150 1360,100 1375,31" />
              <path class="water" d="M1080 270L1085 235L1100 225L1095 260L1085 272Z" />
              <g fill="#eef0ef">
                <polygon points="640,1040 700,1035 725,1090 790,1140 808,1200 770,1270 725,1330 690,1400 660,1450 630,1470 560,1445 500,1430 495,1390 520,1310 570,1260 620,1200 625,1130" />
                <polygon fill="#f4f5f4" points="1135,1125 1185,1112 1210,1130 1250,1175 1330,1195 1400,1260 1420,1330 1390,1370 1310,1385 1210,1355 1165,1345 1140,1285 1115,1280 1115,1210" />
                <polygon points="1010,1040 1030,1028 1050,1040 1045,1070 1008,1090" />
                <circle cx="1036" cy="1155" r="14" />
                <polygon fill="#f4f5f4" points="830,1275 870,1272 1000,1310 1065,1385 1030,1440 985,1445 970,1490 970,1568 635,1568 700,1500 760,1400 800,1330" />
                <polygon points="160,565 205,475 225,480 180,580" />
              </g>
              <polygon class="water" points="60,1330 180,1310 185,1350 130,1460 105,1440 60,1400" />
              <path class="water" d="M230 1130L260 1122L290 1140L275 1190L262 1150ZM125 1182L158 1186L130 1196Z" />
            </g>
            <g :transform="tf(E)">
              <polygon fill="#f4f5f4" points="-60,960 -60,20 0,0 320,0 350,45 300,105 245,110 230,165 340,100 360,135 385,115 415,160 405,230 440,235 455,320 548,302 540,280 548,278 535,180 640,155 640,120 655,105 710,135 775,38 800,70 795,110 750,155 930,270 930,960" />
              <polygon fill="#eaeeed" points="455,320 548,302 535,180 640,155 640,120 655,105 710,135 775,38 800,70 750,155 930,270 930,500 850,410 780,360 700,360 640,390 550,430 480,435" />
              <path d="M560 430L720 160L780 50M645 120L930 320M575 265H660M590 330L740 190Q800 240 930 300M560 180L640 240M770 300L810 260" fill="none" stroke="#f0f1f1" stroke-width="14" />
              <path class="water" d="M45 50L60 45L65 60L82 70L75 82L50 62Z" />
            </g>
            <polygon fill="url(#g4)" points="1080,990 1125,940 1165,975 1215,985 1260,1035 1272,1072 1220,1078 1120,1060 1040,1040" />
            <polygon fill="url(#g4)" points="1020,1060 1110,1068 1180,1090 1200,1160 1140,1190 1000,1180 930,1200 970,1100" />
            <polygon fill="url(#g5)" points="1225,1105 1350,1062 1385,1070 1430,1120 1430,1290 1225,1290 1210,1160" />
            <g :transform="tf(D)">
              <polygon class="water" points="845,0 850,80 800,170 730,270 690,370 640,440 560,580 480,690 420,790 410,860 410,930 400,1000 430,1100 430,1150 410,1200 400,1330 365,1430 350,1480 320,1500 160,1536 455,1536 465,1450 490,1350 520,1290 560,1200 575,1090 560,990 570,940 600,890 570,885 558,865 575,840 570,800 600,760 612,715 605,690 640,650 655,660 665,625 670,580 730,490 800,350 820,290 880,225 930,190 950,150 915,120 910,70 930,20 1000,20 1020,45 1050,35 1075,0" />
              <polygon fill="#eef0ef" points="845,140 870,125 870,180 820,260 775,330 720,420 680,500 570,630 600,560 650,460 700,370 760,260" />
              <path class="water" d="M390 40L430 30L462 70L440 90L420 70L400 85ZM482 85L495 78V98L485 102ZM395 240L400 280L380 290L365 265L385 270Z" />
              <polyline class="creek" stroke-width="9" points="580,900 630,865 690,858 760,885 840,930 868,980 885,1035 930,1085 1025,1108" />
              <polyline class="creek" stroke-width="5" points="832,875 790,895 775,965" />
              <polyline class="creek" stroke-width="4" points="640,648 690,670" /><polyline class="creek" stroke-width="5" points="565,1160 618,1182" />
              <polyline class="creek" stroke-width="5" points="862,845 885,775" />
              <polygon class="water" points="1040,1130 1095,1190 1150,1200 1095,1210 1115,1350 1095,1350 1095,1290" />
              <polyline class="creek" stroke-width="5" points="1095,1325 1030,1350 1030,1385 990,1400" />
              <polyline class="creek" stroke-width="5" points="1110,1340 1120,1370 1150,1375 1105,1390" />
              <polyline class="creek" stroke-width="6" points="1010,1430 985,1440 1010,1536" />
            </g>

            <!-- Meadowlands -->
            <g :transform="tf(A)">
              <polyline class="creek" stroke-width="17" points="660,31 675,100 655,190 680,330 655,400 605,450 600,560 625,620 662,680 655,780 620,870 590,900" />
              <polyline class="creek" stroke-width="18" points="600,895 560,905 420,905 240,935 160,1000 125,1080" />
              <polyline class="creek" stroke-width="10" points="670,60 710,70 730,130 770,200 825,235" />
              <polyline class="creek" stroke-width="10" points="945,31 940,150 920,225 880,245" />
              <polygon class="water" points="550,270 580,225 605,240 620,290 590,340 555,320" />
              <polygon class="water" points="375,620 410,605 560,620 470,690 385,720" />
              <polygon class="water" points="10,1100 120,1105 45,1170 85,1215 10,1285" />
              <polygon class="water" points="370,1170 400,1110 470,1080 550,1030 560,1080 440,1240 410,1215" />
              <polygon class="water" points="600,1000 650,1010 620,1120 580,1205 535,1160" />
              <polygon class="water" points="510,830 550,815 555,845 520,860" />
              <polygon class="water" points="1065,1010 1140,1020 1105,1050" />
              <polygon class="water" points="10,905 60,915 10,925" /><polygon class="water" points="40,650 70,690 60,705 45,680" /><polygon class="water" points="200,195 212,165 214,196" />
              <polygon class="water" points="710,720 740,730 770,680 770,740 745,762 715,755" />
              <polyline class="creek" stroke-width="4" points="770,675 810,670 820,610 860,570 960,570" />
              <polyline class="creek" stroke-width="2" points="960,570 1010,510 1070,420" />
              <polyline class="creek" stroke-width="4" points="575,1205 545,1250 570,1240 535,1330 555,1390 510,1470" />
              <polyline class="creek" stroke-width="3" points="700,740 705,820 730,840" /><polyline class="creek" stroke-width="3" points="600,370 650,400 570,430" />
              <polyline class="creek" stroke-width="2" points="515,480 380,600" />
              <polyline class="creek" stroke-width="3" points="480,945 500,1000 540,1040 570,1010 520,950 600,990" />
              <polyline class="creek" stroke-width="2" points="480,240 500,330 530,370 540,420" /><polyline class="creek" stroke-width="2" points="330,545 375,610 370,700" />
              <polyline class="creek" stroke-width="2" points="10,480 50,530 150,575" /><polyline class="creek" stroke-width="2" points="60,50 75,110 55,140 90,145 130,110" />
              <polyline class="creek" stroke-width="3" points="430,880 420,740 480,710" /><polyline class="creek" stroke-width="2" points="235,690 280,730 285,760" />
              <polyline class="creek" stroke-width="4" points="10,250 20,380 45,380" /><polyline class="creek" stroke-width="2" points="630,1060 675,1085" /><polyline class="creek" stroke-width="2" points="620,1130 655,1155" />
              <polyline class="creek" stroke-width="3" points="345,1245 350,1180 375,1170" /><polyline class="creek" stroke-width="4" points="830,430 890,430 905,400" />
            </g>
            <g :transform="tf(C)">
              <path class="water" d="M0 600Q46 620 46 700Q40 760 0 790ZM655 318L668 295L700 325L690 350ZM296 855L315 815L335 828L318 870ZM108 140L127 98L130 145Z" />
              <polyline class="creek" stroke-width="3" points="310,0 290,40 310,100 295,170" /><polyline class="creek" stroke-width="3" points="285,200 245,270 250,340 210,345 180,320 120,360" />
              <polyline class="creek" stroke-width="2" points="178,270 182,320" /><polyline class="creek" stroke-width="3" points="10,430 30,470 25,510 10,570" />
              <polygon class="water" points="370,1470 490,1480 485,1425 510,1440 505,1480 530,1480 560,1510 400,1480" />
            </g>

            <!-- streets: casing first, then the carriageway -->
            <g v-for="(s, i) in sheets" :key="'c' + i" :transform="tf(s)" class="road casing">
              <polyline v-for="(r, j) in s.roads" :key="j" :points="r[1]" :stroke-width="r[0] + 2.6" />
            </g>
            <g v-for="(s, i) in sheets" :key="'r' + i" :transform="tf(s)" class="road">
              <polyline v-for="(r, j) in s.roads" :key="j" :points="r[1]" :stroke-width="r[0] * 0.92" />
            </g>

            <path d="M1397 1039.500c1.700 0 2.600 2.500 2.600 5v4.500l9.400 3.500v3.200h-9.400l-.8 5 4 2.400v2.400h-11.600v-2.400l4-2.400-.8-5h-9.400v-3.200l9.400-3.500v-4.500c0-2.500.9-5 2.600-5z" fill="#6b6b6b" stroke="#fff" stroke-width="4" paint-order="stroke" />
            <text
              v-for="(l, i) in labels" :key="'l' + i" class="place" :x="l.x - 1" :y="l.y" :textLength="l.w"
              :lengthAdjust="l.t === 'THE BRONX' ? 'spacing' : 'spacingAndGlyphs'" :font-size="l.s" :fill="l.c" :font-weight="l.b ? 500 : 400"
            >{{ l.t }}</text>
            <circle v-for="(h, i) in hubs" :key="'h' + i" :cx="h.x" :cy="h.y" r="5.600" fill="#87cefa" />
            <circle cx="849.400" cy="1179.300" r="5.600" fill="#f04e00" />
            <circle cx="730.200" cy="1361.500" r="5.600" fill="#96430a" />
          </svg>

          <div class="legend">
            <div class="legend-title">action</div>
            <div v-for="l in legend" :key="l.name" class="legend-row">
              <i :style="{ background: l.color }"></i><span>{{ l.name }}</span>
            </div>
          </div>
        </div>
      </section>

      <aside class="side">
        <div class="select"><span>Select an order</span><i class="caret"></i></div>
        <div class="card order"><b>CURRENT ORDER:</b></div>
        <div class="card route">
          <b>Calculated route:</b>
          <div class="scroll"><i class="up"></i><i class="down"></i></div>
        </div>
        <input class="hub-input" type="text" placeholder="Enter next hub ID" />
        <div class="card time"><b>Current Time:</b></div>
        <div class="actions"><b>Actions taken:</b></div>
        <div class="graph small">
          <div class="modebar">
            <div class="group">
              <svg class="ic" viewBox="0 0 96 96"><path d="M25 24L31 9H64L70 24Z" /><rect y="23" width="96" height="64" rx="9" /><circle cx="47.500" cy="53" r="18.500" fill="#c7c7c7" stroke="#fefefe" stroke-width="8" /><circle cx="83" cy="36" r="4" fill="#fefefe" /></svg>
            </div>
            <div class="group">
              <svg class="ic" viewBox="0 0 96 96"><rect width="96" height="96" rx="12" fill="#000" /><g fill="#fff"><rect x="18" y="52" width="9" height="27" rx="4" /><rect x="35" y="35" width="9" height="44" rx="4" /><rect x="53" y="52" width="9" height="27" rx="4" /><rect x="70" y="35" width="9" height="44" rx="4" /></g><g fill="#f4510b"><circle cx="22" cy="22" r="4.500" /><circle cx="22" cy="39.500" r="4.500" /></g><circle cx="39.500" cy="22" r="4.500" fill="#d8b078" /><circle cx="57.500" cy="22" r="4.500" fill="#b9b9d0" /><circle cx="57.500" cy="39.500" r="4.500" fill="#b9b9d0" /><circle cx="74.500" cy="22" r="4.500" fill="#87cefa" /></svg>
            </div>
          </div>
        </div>
      </aside>
    </main>

    <footer class="taskbar"><i class="pill"></i></footer>

    <svg class="cursor" viewBox="-1 -1 42 103" preserveAspectRatio="none">
      <path d="M0 0V88L12 71L21 100L29 95L21 65H39Z" fill="#fff" stroke="#000" stroke-width="1" vector-effect="non-scaling-stroke" />
    </svg>
  </div>
</template>

<style>
html,
body {
  margin: 0;
  background: #fefefe;
  overflow: hidden;
}
</style>

<style scoped>
.page {
  position: relative;
  width: 2684px;
  height: 1547px;
  overflow: hidden;
  display: flex;
  flex-direction: column;
  background: #fefefe;
  color: #000;
  font-family: 'Liberation Serif', 'Times New Roman', serif;
  font-size: 40px;
}
.chrome {
  flex: none;
  height: 12px;
  border-bottom: 2px solid #d9dbda;
}
.header {
  flex: none;
  box-sizing: border-box;
  height: 178px;
  padding: 16px 4px 0 5px;
  display: flex;
  align-items: flex-start;
}
h1 {
  margin: 44px 0 0;
  font-size: 64px;
  line-height: 74px;
  letter-spacing: -0.1px;
  font-weight: 700;
}
.logo {
  width: 600px;
  height: 160px;
  margin-left: auto;
  margin-right: -164px;
}
.logo-text {
  margin-top: 40px;
  overflow: visible;
}
.tabs {
  flex: none;
  height: 127px;
  margin: 0 10px 2px 5px;
  display: flex;
  align-items: flex-end;
}
.tab {
  flex: 1;
  height: 127px;
  line-height: 127px;
  background: #d3d3d3;
  text-align: center;
}
.tab.selected {
  height: 125px;
  line-height: 127px;
  background: #fefefe;
  border-top: 4px solid #808080;
}
.panel {
  flex: none;
  box-sizing: border-box;
  height: 1215px;
  margin: 0 10px 0 4px;
  padding: 20px 0 0 20px;
  display: flex;
  background: #dbdddc;
  overflow: hidden;
}
.graph {
  flex: none;
  box-sizing: border-box;
  width: 1602px;
  height: 1195px;
  padding-top: 8px;
  background: #fefefe;
}
.modebar {
  display: flex;
  justify-content: flex-end;
  gap: 32px;
  padding-right: 12px;
  height: 32px;
}
.group {
  display: flex;
  gap: 16px;
}
.ic {
  width: 32px;
  height: 32px;
  fill: #c7c7c7;
}
.ic.active {
  fill: #7c7c7c;
}
.plot {
  display: flex;
  align-items: flex-start;
  margin: 80px 0 0 160px;
}
.map {
  flex: none;
  display: block;
}
.st {
  fill: none;
  stroke: #e6ebea;
  stroke-width: 2.2;
}
.water {
  fill: #cad2d4;
}
.creek {
  fill: none;
  stroke: #cad2d4;
  stroke-linejoin: round;
  vector-effect: non-scaling-stroke;
}
.road polyline {
  fill: none;
  stroke: #fefefe;
  stroke-linejoin: round;
  stroke-linecap: round;
  vector-effect: non-scaling-stroke;
}
.road.casing polyline {
  stroke: #e9eded;
}
.place {
  font-family: Roboto, 'Open Sans', sans-serif;
  stroke: rgba(255, 255, 255, 0.85);
  stroke-width: 4px;
  stroke-linejoin: round;
  paint-order: stroke;
}
.legend {
  margin: 7px 0 0 29px;
  color: #2a3f5f;
  font-family: 'DejaVu Sans', Verdana, sans-serif;
  font-size: 24px;
}
.legend-title {
  height: 39px;
  line-height: 38px;
  font-size: 27.5px;
}
.legend-row {
  display: flex;
  align-items: center;
  height: 38px;
  padding-left: 30px;
}
.legend-row i {
  width: 12px;
  height: 12px;
  border-radius: 50%;
  margin-right: 34px;
}
.legend-row span {
  line-height: 36px;
  padding-top: 3px;
}
.side {
  width: 801px;
  margin-left: 100px;
  display: flex;
  flex-direction: column;
  align-items: flex-start;
}
.select {
  flex: none;
  box-sizing: border-box;
  width: 801px;
  height: 72px;
  padding: 0 20px 0 20px;
  display: flex;
  align-items: center;
  justify-content: space-between;
  border: 2px solid #ccc;
  border-radius: 8px;
  background: #fefefe;
  color: #aaa;
}
.caret {
  margin-top: 4px;
  border: 10px solid transparent;
  border-top-color: #999;
  border-bottom: 0;
}
.card {
  flex: none;
  box-sizing: border-box;
  width: 801px;
  padding: 21px 0 0 20px;
  line-height: 46px;
  border-radius: 10px;
  background: #fefefe;
  box-shadow: 0 8px 16px rgba(0, 0, 0, 0.22), 0 4px 24px rgba(0, 0, 0, 0.04);
}
.order {
  height: 280px;
  margin-top: 20px;
}
.route {
  height: 160px;
  margin-top: 53px;
  display: flex;
  justify-content: space-between;
  padding-top: 0;
  overflow: hidden;
}
.route b {
  margin-top: 21px;
}
.scroll {
  width: 34px;
  box-sizing: border-box;
  padding: 14px 0;
  display: flex;
  flex-direction: column;
  align-items: center;
  justify-content: space-between;
  background: #f1f1ef;
}
.up,
.down {
  border: 8px solid transparent;
}
.up {
  border-top: 0;
  border-bottom-color: #a3a3a3;
}
.down {
  border-bottom: 0;
  border-top-color: #a3a3a3;
}
.hub-input {
  flex: none;
  box-sizing: border-box;
  width: 341px;
  height: 52px;
  margin: 56px 0 0;
  padding: 0 6px 2px;
  border: 2px solid #767676;
  border-radius: 4px;
  background: #fefefe;
  font-family: 'Liberation Sans', Arial, sans-serif;
  font-size: 26.67px;
}
.hub-input::placeholder {
  color: #757575;
}
.time {
  height: 87px;
  margin-top: 20px;
}
.actions {
  flex: none;
  box-sizing: border-box;
  width: 288px;
  height: 45px;
  line-height: 46px;
  margin-top: 54px;
  padding-left: 20px;
  white-space: nowrap;
  background: #fefefe;
}
.small {
  width: 400px;
  height: 275px;
  margin-top: 21px;
  padding-top: 16px;
}
.taskbar {
  flex: 1;
  display: flex;
  align-items: flex-end;
  box-sizing: border-box;
  border-top: 2px solid #c9cfdc;
  border-bottom: 1px solid #a4acc0;
  background: linear-gradient(90deg, #d8dde9 0, #d3e0ea 18%, #d8dde9 32%, #d8dde9 64%, #d0e0e8 73%, #d8dde9 84%, #cfe0e8 92%, #d8dde9 98%);
}
.pill {
  width: 74px;
  height: 3px;
  margin-left: 1804px;
  border-radius: 4px 4px 0 0;
  background: #e8e3e2;
}
.cursor {
  position: absolute;
  left: 2602px;
  top: 1083px;
  width: 27px;
  height: 40px;
}
</style>
